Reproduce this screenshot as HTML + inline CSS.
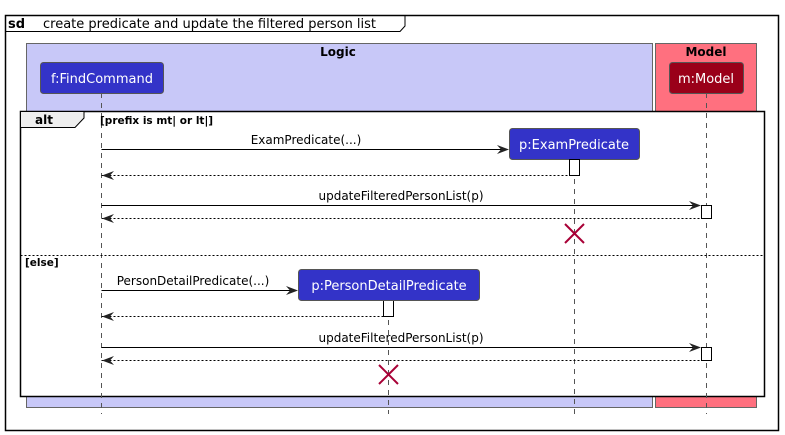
<!DOCTYPE html>
<html><head><meta charset="utf-8"><style>
html,body{margin:0;padding:0;background:#fff;}
svg{display:block;font-family:"DejaVu Sans","Liberation Sans",sans-serif;}
</style></head><body>
<svg width="785" height="435" viewBox="0 0 785 435" xmlns="http://www.w3.org/2000/svg">
<rect x="0" y="0" width="785" height="435" fill="#fff"/>
<rect x="5.5" y="15.5" width="773" height="415" fill="none" stroke="#000" stroke-width="1.5"/>
<path d="M5.5 31.5 H400 L405 26 V15.5" fill="none" stroke="#000" stroke-width="1"/>
<text x="8" y="28" font-size="13" font-weight="bold">sd</text>
<text x="43" y="28" font-size="13">create predicate and update the filtered person list</text>
<rect x="26.5" y="43.5" width="626" height="364" fill="#C8C8F8" stroke="#666" stroke-width="1"/>
<rect x="655.5" y="43.5" width="101" height="364" fill="#FF707F" stroke="#666" stroke-width="1"/>
<text x="338" y="56" font-size="12" font-weight="bold" text-anchor="middle">Logic</text>
<text x="706" y="56" font-size="12" font-weight="bold" text-anchor="middle">Model</text>
<!-- alt frame background -->
<rect x="20.5" y="111.5" width="744" height="285" fill="#fff" stroke="#000" stroke-width="1.5"/>
<g stroke="#555" stroke-width="1" stroke-dasharray="5,5">
<line x1="101.5" y1="93" x2="101.5" y2="414"/>
<line x1="706.5" y1="93" x2="706.5" y2="414"/>
<line x1="574.5" y1="159" x2="574.5" y2="414"/>
<line x1="388.5" y1="300" x2="388.5" y2="414"/>
</g>
<rect x="40.5" y="62.5" width="123" height="31" rx="3" fill="#3333C8" stroke="#555"/>
<text x="102" y="83" font-size="13" fill="#fff" text-anchor="middle">f:FindCommand</text>
<rect x="669.5" y="62.5" width="74" height="31" rx="3" fill="#9A0019" stroke="#555"/>
<text x="706" y="83" font-size="13" fill="#fff" text-anchor="middle">m:Model</text>
<path d="M20.5 127.5 H75 L84 118 V111.5 H20.5 Z" fill="#EEEEEE" stroke="#000" stroke-width="1"/>
<text x="35" y="124" font-size="12" font-weight="bold">alt</text>
<text x="100" y="124" font-size="10.5" font-weight="bold">[prefix is mt| or lt|]</text>
<line x1="20.5" y1="255.5" x2="764.5" y2="255.5" stroke="#000" stroke-dasharray="2,2"/>
<text x="25" y="266" font-size="10.5" font-weight="bold">[else]</text>
<rect x="509.5" y="128.5" width="130" height="31" rx="3" fill="#3333C8" stroke="#555"/>
<text x="574" y="149" font-size="13" fill="#fff" text-anchor="middle">p:ExamPredicate</text>
<g stroke="#000" stroke-width="1" fill="none">
<line x1="101.5" y1="149.5" x2="506" y2="149.5"/>
<line x1="101.5" y1="175.5" x2="569" y2="175.5" stroke-dasharray="2,2"/>
<line x1="101.5" y1="205.5" x2="698" y2="205.5"/>
<line x1="101.5" y1="218.5" x2="701" y2="218.5" stroke-dasharray="2,2"/>
<line x1="101.5" y1="290.5" x2="295" y2="290.5"/>
<line x1="101.5" y1="316.5" x2="383" y2="316.5" stroke-dasharray="2,2"/>
<line x1="101.5" y1="347.5" x2="698" y2="347.5"/>
<line x1="101.5" y1="360.5" x2="701" y2="360.5" stroke-dasharray="2,2"/>
</g>
<g fill="#222">
<path d="M509 149.5 L497 145 L501 149.5 L497 154 Z"/>
<path d="M701 205.5 L689 201 L693 205.5 L689 210 Z"/>
<path d="M298 290.5 L286 286 L290 290.5 L286 295 Z"/>
<path d="M701 347.5 L689 343 L693 347.5 L689 352 Z"/>
<path d="M102 175.5 L114 171 L110 175.5 L114 180 Z"/>
<path d="M102 218.5 L114 214 L110 218.5 L114 223 Z"/>
<path d="M102 316.5 L114 312 L110 316.5 L114 321 Z"/>
<path d="M102 360.5 L114 356 L110 360.5 L114 365 Z"/>
</g>
<g fill="#fff" stroke="#000">
<rect x="569.5" y="159.5" width="10" height="16"/>
<rect x="701.5" y="205.5" width="10" height="13"/>
<rect x="383.5" y="300.5" width="10" height="16"/>
<rect x="701.5" y="347.5" width="10" height="13"/>
</g>
<g font-size="12" text-anchor="middle">
<text x="306" y="144">ExamPredicate(...)</text>
<text x="401" y="200">updateFilteredPersonList(p)</text>
<text x="193" y="285">PersonDetailPredicate(...)</text>
<text x="401" y="342">updateFilteredPersonList(p)</text>
</g>
<rect x="298.5" y="269.5" width="181" height="31" rx="3" fill="#3333C8" stroke="#555"/>
<text x="389" y="290" font-size="13" fill="#fff" text-anchor="middle">p:PersonDetailPredicate</text>
<g stroke="#A80036" stroke-width="2">
<path d="M565 224 L584 243 M584 224 L565 243"/>
<path d="M379 365 L398 384 M398 365 L379 384"/>
</g>
</svg>
</body></html>
